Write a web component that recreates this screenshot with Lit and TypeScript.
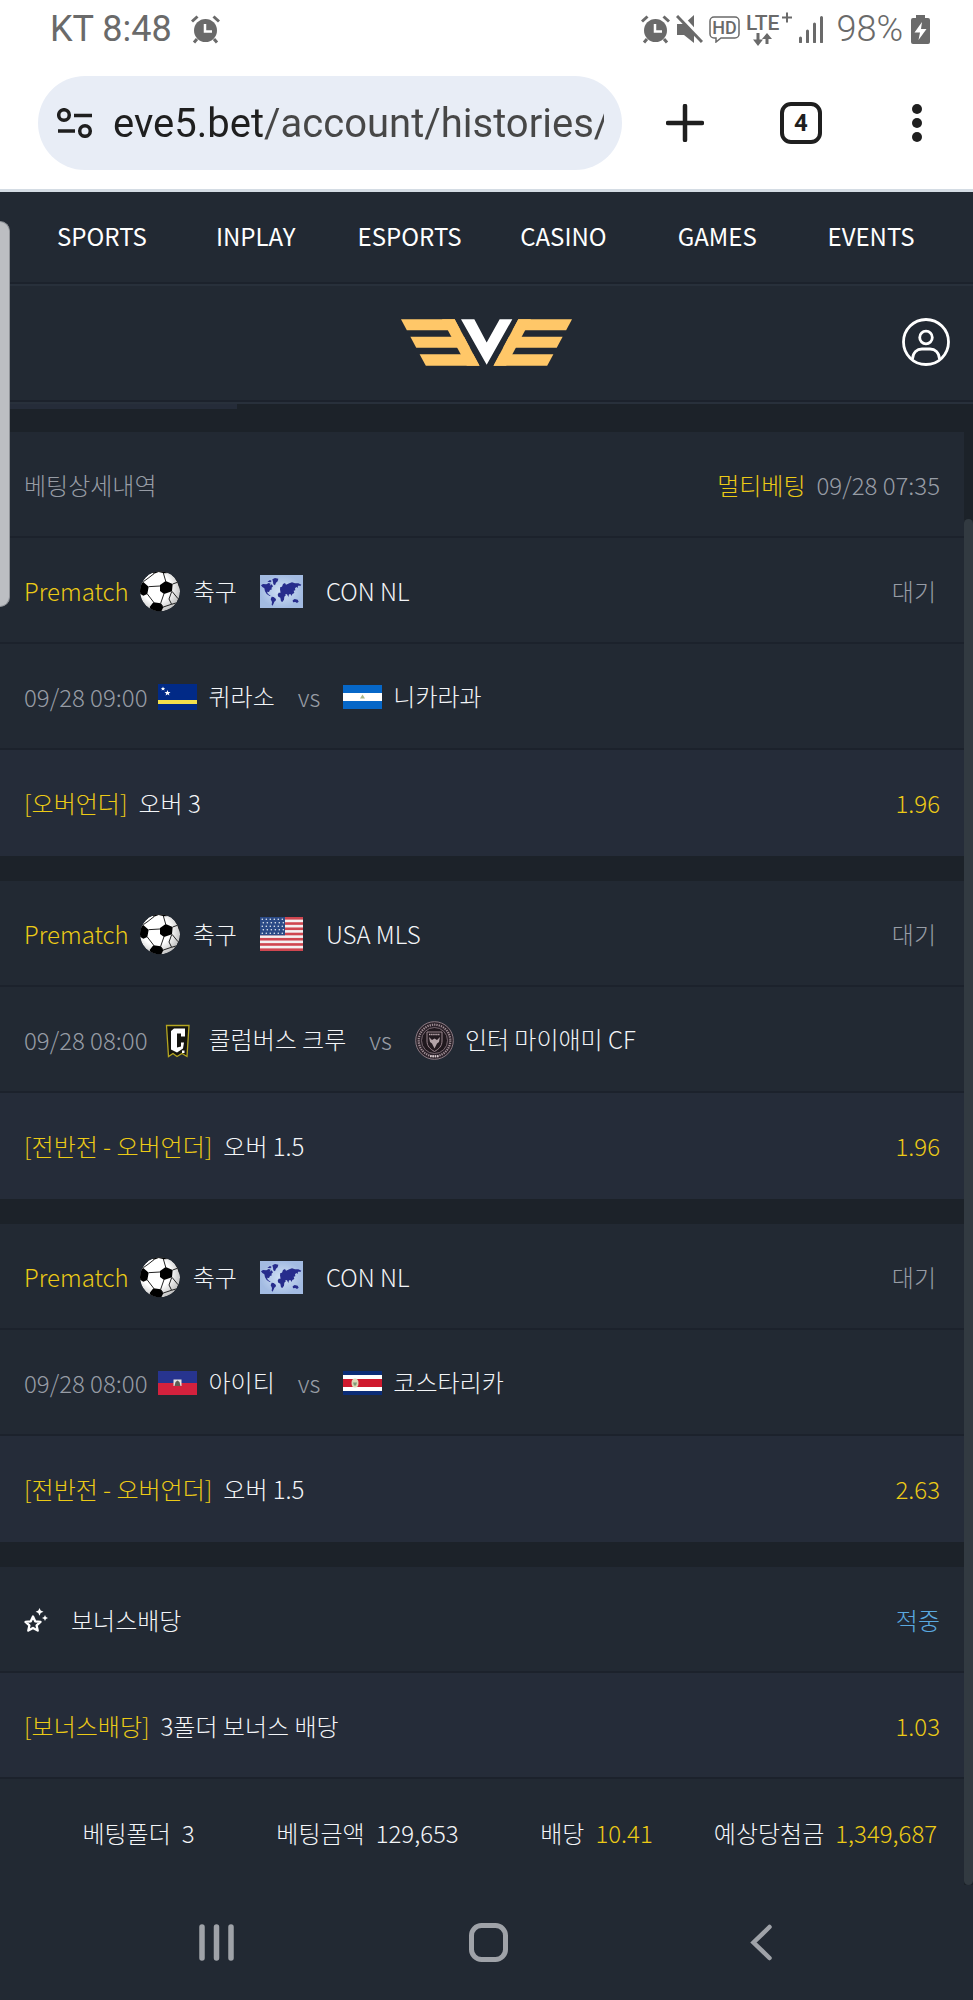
import { LitElement, html, css, svg, nothing } from "lit";
import type { TemplateResult } from "lit";
import { customElement, property } from "lit/decorators.js";

interface Team {
  name: string;
  badge: string;
}

interface Bet {
  sport: string;
  league: string;
  leagueFlag: string;
  status: string;
  date: string;
  home: Team;
  away: Team;
  market: string;
  pick: string;
  odds: string;
}

const MENU = ["SPORTS", "INPLAY", "ESPORTS", "CASINO", "GAMES", "EVENTS"];

const BETS: Bet[] = [
  {
    sport: "축구",
    league: "CON NL",
    leagueFlag: "world",
    status: "대기",
    date: "09/28 09:00",
    home: { name: "퀴라소", badge: "curacao" },
    away: { name: "니카라과", badge: "nicaragua" },
    market: "오버언더",
    pick: "오버 3",
    odds: "1.96",
  },
  {
    sport: "축구",
    league: "USA MLS",
    leagueFlag: "usa",
    status: "대기",
    date: "09/28 08:00",
    home: { name: "콜럼버스 크루", badge: "columbus" },
    away: { name: "인터 마이애미 CF", badge: "miami" },
    market: "전반전 - 오버언더",
    pick: "오버 1.5",
    odds: "1.96",
  },
  {
    sport: "축구",
    league: "CON NL",
    leagueFlag: "world",
    status: "대기",
    date: "09/28 08:00",
    home: { name: "아이티", badge: "haiti" },
    away: { name: "코스타리카", badge: "costarica" },
    market: "전반전 - 오버언더",
    pick: "오버 1.5",
    odds: "2.63",
  },
];

const SUMMARY = [
  { label: "베팅폴더", value: "3", highlight: false },
  { label: "베팅금액", value: "129,653", highlight: false },
  { label: "배당", value: "10.41", highlight: true },
  { label: "예상당첨금", value: "1,349,687", highlight: true },
];

const stripes = [0, 1, 2, 3, 4, 5, 6];
const starRows = [0, 1, 2, 3, 4];
const starCols = [0, 1, 2, 3, 4, 5];

/** Inline pictures by name. Each one carries its own size. */
const ICONS: Record<string, TemplateResult> = {
  alarm: html`<svg width="29" height="29" viewBox="0 0 29 29">
    <circle cx="14.500" cy="15.500" r="11.500" fill="currentColor" />
    <path d="M1 6.500 6.500 1.500M28 6.500 22.500 1.500M6 24l-3 3.500M23 24l3 3.500" stroke="currentColor" stroke-width="3" />
    <path d="M14 9v7.500h7" fill="none" stroke="#fff" stroke-width="2.500" />
  </svg>`,
  mute: html`<svg width="27" height="29" viewBox="0 0 27 29">
    <path d="M1 9h7l10-9v28L8 20H1z" fill="currentColor" />
    <path d="M4 0 27 25" stroke="#fff" stroke-width="4" />
    <path d="M1 1 26 27" stroke="currentColor" stroke-width="3" />
  </svg>`,
  hd: html`<svg width="31" height="27" viewBox="0 0 31 27">
    <path d="M5 1h21a4 4 0 0 1 4 4v13a4 4 0 0 1-4 4H12l-5 4v-4H5a4 4 0 0 1-4-4V5a4 4 0 0 1 4-4z" fill="none" stroke="currentColor" stroke-width="1.500" />
    <text x="15.500" y="18" text-anchor="middle" font-family="Roboto, sans-serif" font-size="18" font-weight="500" fill="currentColor">HD</text>
  </svg>`,
  lte: html`<svg width="47" height="36" viewBox="0 0 47 36">
    <text x="0" y="19" font-family="Roboto, sans-serif" font-size="21" font-weight="500" fill="currentColor">LTE</text>
    <path d="M36 6.500h10M41 1.500v10" stroke="currentColor" stroke-width="2" />
    <path d="M12 22v9M21 33v-9" stroke="currentColor" stroke-width="3" />
    <path d="M7 28.500h10L12 35zM16 28h10L21 22z" fill="currentColor" />
  </svg>`,
  signal: html`<svg width="25" height="27" viewBox="0 0 25 27">
    <path d="M1.500 22v4M8.500 15v11M15.500 8v18M22.500 1.500V26" stroke="currentColor" stroke-width="3" stroke-linecap="round" />
  </svg>`,
  battery: html`<svg width="19" height="29" viewBox="0 0 19 29">
    <path d="M5 0h9v3h3a2 2 0 0 1 2 2v22a2 2 0 0 1-2 2H2a2 2 0 0 1-2-2V5a2 2 0 0 1 2-2h3z" fill="currentColor" />
    <path d="M11 7 3.500 17.500H9L7.500 25 15.500 14H10z" fill="#fff" />
  </svg>`,
  tune: html`<svg width="36" height="30" viewBox="0 0 36 30" fill="none" stroke="#1f1f1f" stroke-width="3.500">
    <circle cx="7" cy="7" r="5.300" />
    <path d="M17 7.500h18M1 23h17" />
    <circle cx="28" cy="23" r="5.300" />
  </svg>`,
  plus: html`<svg width="38" height="38" viewBox="0 0 38 38">
    <path d="M19 2v34M2 19h34" stroke="#1f1f1f" stroke-width="4.500" stroke-linecap="round" />
  </svg>`,
  dots: html`<svg width="10" height="38" viewBox="0 0 10 38" fill="#1f1f1f">
    <circle cx="5" cy="5" r="5" />
    <circle cx="5" cy="19" r="5" />
    <circle cx="5" cy="33" r="5" />
  </svg>`,
  logo: html`<svg width="171" height="47" viewBox="0 0 513 140">
    <g fill="#ffc768">
      <g transform="skewX(28)">
        <rect width="161" height="33" />
        <rect y="53" width="161" height="33" />
        <rect y="105" width="161" height="35" />
        <rect x="123" width="38" height="140" />
      </g>
      <g transform="translate(513 0) scale(-1 1) skewX(28)">
        <rect width="161" height="33" />
        <rect y="53" width="161" height="33" />
        <rect y="105" width="161" height="35" />
        <rect x="123" width="38" height="140" />
      </g>
    </g>
    <path d="M180 0h40l37 70 39-70h38l-77 137z" fill="#fff" />
  </svg>`,
  user: html`<svg width="48" height="48" viewBox="0 0 48 48" fill="none" stroke="#fff" stroke-width="2.800">
    <circle cx="24" cy="24" r="22.500" />
    <circle cx="24" cy="19.500" r="6.300" />
    <path d="M10.500 41c.5-6.500 4.500-10 9.500-10h8c5 0 9 3.500 9.500 10" />
  </svg>`,
  ball: html`<svg width="40" height="41" viewBox="0 0 120 123">
    <defs>
      <radialGradient id="shade" cx="0.400" cy="0.400" r="0.650">
        <stop offset="0.550" stop-color="#fff" />
        <stop offset="1" stop-color="#bdbdbd" />
      </radialGradient>
      <clipPath id="round"><circle cx="60" cy="61" r="60" /></clipPath>
    </defs>
    <g clip-path="url(#round)">
      <circle cx="60" cy="61" r="60" fill="url(#shade)" />
      <path d="M60 42 77 30l21 9-2 22-24 8-12-9zM-2 46 9 32l17 15-4 22-12 5L0 68zM29 108l11-14 22 3 8 12-8 16-28-2zM34 4 60-2l28 8-16 1-16-4-14 5zM104 20l18 18 2 24-8-16-4-12zM124 74l-10 10-6 20-14 14 30-6z" />
      <path d="M26 47l34-2M22 69l20 26M72 68 62 97M96 61l18 22M98 39l14-5M77 30 70 6M10 32 24 22 42 8M62 97l8 12M70 108l24-8 14-4M95 62l-8 22 8 16" fill="none" stroke="#222" stroke-width="3" />
    </g>
  </svg>`,
  world: html`<svg width="43" height="33" viewBox="0 0 129 99">
    <defs>
      <radialGradient id="sea">
        <stop offset="0" stop-color="#d2e2f5" />
        <stop offset="1" stop-color="#a3bbe2" />
      </radialGradient>
    </defs>
    <rect width="129" height="99" fill="url(#sea)" />
    <path d="M3 31l6-4 10 1 7-4 6 2-3 6 6-4 4 6-5 5 2 4-6 2-3 6-5-1 0 4 5 5 5 3-3 1-9-6-5-8-2-9-6-4zM37 13l8-4 10 2-2 8-5 4-3 8-5-3-1-8zM22 20l8-5 5 3-4 4zM35 65l6 1 7 6-1 5-4 3-3 8-3 4-2-3 1-8-4-8zM56 53l8-2 8 3 6 6-5 5-1 9-5 7-4-2-2-11-6-3-2-6zM60 43l1-7 5-1 3-8 6-3 3 5 10-4 8-3 9 3 10 0 9 4-2 3-8 0-1 7-4-3-4 4 1 6-5 1 2 7-6 3-2 6-3-5-5 0-2 8-4-8-5-1-3 3-6-6-5 2zM98 76l6-4 9 2 3 6-5 4-5-3-7 1z" fill="#272c8c" />
  </svg>`,
  usa: html`<svg width="43" height="34" viewBox="0 0 43 34">
    <rect width="43" height="34" fill="#f4f1f2" />
    ${stripes.map((i) => svg`<rect y=${i * 5.23} width="43" height="2.615" fill="#cf4650" />`)}
    <rect width="25" height="18.300" fill="#2b4a86" />
    ${starRows.map((r) =>
      starCols.map(
        (c) => svg`<circle cx=${2.3 + c * 4 + (r % 2)} cy=${2.2 + r * 3.5} r="0.800" fill="#e8edf5" />`
      )
    )}
  </svg>`,
  curacao: html`<svg width="39" height="26" viewBox="0 0 39 26">
    <rect width="39" height="26" fill="#012a87" />
    <rect y="16" width="39" height="4" fill="#f3e04c" />
    <path d="M5 2.500l.6 1.500h1.600L6 5l.5 1.600L5 5.700l-1.400.9L4 5 2.800 4h1.600zM9.500 6l.8 2h2.200l-1.700 1.400.6 2.200-1.900-1.300-1.900 1.300.6-2.200L6.500 8h2.200z" fill="#fff" />
  </svg>`,
  nicaragua: html`<svg width="39" height="24" viewBox="0 0 39 24">
    <rect width="39" height="24" fill="#0667c8" />
    <rect y="8" width="39" height="8" fill="#fff" />
    <path d="M19.500 9.500l2.500 4h-5z" fill="#a9b88a" />
  </svg>`,
  haiti: html`<svg width="39" height="24" viewBox="0 0 39 24">
    <rect width="39" height="12" fill="#27348f" />
    <rect y="12" width="39" height="12" fill="#d4213d" />
    <rect x="15.500" y="8.500" width="8" height="6.500" fill="#e9e6e2" />
    <path d="M16.500 15l1-4 2-1.500 2 1.500 1 4z" fill="#5d5f55" />
  </svg>`,
  costarica: html`<svg width="39" height="24" viewBox="0 0 39 24">
    <rect width="39" height="24" fill="#0b2c76" />
    <rect y="4" width="39" height="16" fill="#fff" />
    <rect y="8" width="39" height="8" fill="#cf1a2e" />
    <ellipse cx="12" cy="12" rx="3.500" ry="4.500" fill="#ddd6b4" />
    <path d="M10 11.500h4l-1 3h-2z" fill="#7f9a77" />
  </svg>`,
  columbus: html`<svg width="39" height="39" viewBox="0 0 39 39">
    <path d="M8.500 4.500h22.500l-2 31-5-3-5 3-4-3-4.500 3z" fill="#14140f" stroke="#b5a621" stroke-width="1.300" />
    <path d="M13 10l3-2.500h11v8h-4v-3h-4v14l4-1v-4h3l-1 6-6 4-6-3z" fill="#fff" />
    <path d="M24 29.500h2.500V32H24z" fill="#fff" />
  </svg>`,
  miami: html`<svg width="39" height="39" viewBox="0 0 39 39">
    <circle cx="19.500" cy="19.500" r="18.800" fill="#2a2129" stroke="#8c7a83" stroke-width="1" />
    <circle cx="19.500" cy="19.500" r="15.800" fill="none" stroke="#a08e95" stroke-width="2.200" stroke-dasharray="1.300 1" />
    <circle cx="19.500" cy="19.500" r="13" fill="#20181e" stroke="#8c7a83" stroke-width="0.800" />
    <path d="M12 11h15v9c0 5-3 8-7.500 10.500C15 28 12 25 12 20z" fill="#231a20" stroke="#9a868e" stroke-width="1" />
    <path d="M14 13.500h11" stroke="#c0adb3" stroke-width="1.500" stroke-dasharray="1.500 0.600" />
    <path d="M14 16l3 3 2.500-1.500L22 19l3-3-1 5-2 1.500-2.500 5-2.500-5L15 21z" fill="#b3a3a8" />
    <path d="M15 35.300h9" stroke="#d9ccd0" stroke-width="2" stroke-dasharray="1.600 0.700" />
  </svg>`,
  bonus: html`<svg width="24" height="24" viewBox="0 0 24 24">
    <path d="M9 8.500l2.200 4.800 5.300.6-3.900 3.500 1.100 5.200L9 20l-4.700 2.600 1.100-5.200-3.900-3.500 5.300-.6z" fill="none" stroke="#fff" stroke-width="2.300" stroke-linejoin="round" />
    <path d="M15.500 0l1.200 2.600 2.800 1.100-2.800 1.200-1.200 2.800-1.200-2.800-2.600-1.200 2.600-1.100zM21 7l.9 2.100 2.100.9-2.100.9L21 13l-.9-2.100L18 10l2.100-.9z" fill="#fff" />
  </svg>`,
  recents: html`<svg width="35" height="37" viewBox="0 0 35 37">
    <path d="M3 3v31M17.500 3v31M32 3v31" stroke="currentColor" stroke-width="5.500" stroke-linecap="round" />
  </svg>`,
  home: html`<svg width="39" height="39" viewBox="0 0 39 39">
    <rect x="2.500" y="2.500" width="34" height="34" rx="10" fill="none" stroke="currentColor" stroke-width="5" />
  </svg>`,
  back: html`<svg width="22" height="37" viewBox="0 0 22 37">
    <path d="M19.500 3 3.500 18.500l16 15.500" fill="none" stroke="currentColor" stroke-width="4.500" stroke-linecap="round" />
  </svg>`,
};

/** One match of a multi bet: league line, teams line and the picked odds. */
@customElement("bet-card")
export class BetCard extends LitElement {
  @property({ attribute: false }) bet!: Bet;

  static styles = css`
    :host {
      display: block;
    }
    svg {
      display: block;
      flex: none;
    }
    .row {
      box-sizing: border-box;
      display: flex;
      align-items: center;
      min-height: 106px;
      padding: 2px 24px 0;
      border-bottom: 2px solid var(--line);
      background: var(--panel);
    }
    .row:last-child {
      background: var(--panel-alt);
      border-bottom-color: transparent;
    }
    .ball {
      margin: 0 13px 0 11px;
    }
    .flag {
      margin: 0 23px;
    }
    .end {
      margin-left: auto;
    }
    .status {
      padding-right: 4px;
    }
    .date {
      margin-right: 11px;
    }
    .team {
      display: flex;
      align-items: center;
      gap: 11px;
    }
    .name {
      padding-bottom: 3px;
    }
    .vs {
      margin: 0 23px;
    }
    .pick {
      margin-left: 11px;
    }
    .accent {
      color: var(--accent);
    }
    .muted {
      color: var(--muted);
    }
  `;

  _team(team: Team) {
    return html`<span class="team">${ICONS[team.badge]}<span class="name">${team.name}</span></span>`;
  }

  render() {
    const b = this.bet;
    return html`
      <div class="row">
        <span class="accent">Prematch</span>
        <span class="ball">${ICONS.ball}</span>
        <span>${b.sport}</span>
        <span class="flag">${ICONS[b.leagueFlag]}</span>
        <span>${b.league}</span>
        <span class="end status muted">${b.status}</span>
      </div>
      <div class="row">
        <time class="date muted">${b.date}</time>
        ${this._team(b.home)}
        <span class="vs muted">vs</span>
        ${this._team(b.away)}
      </div>
      <div class="row">
        <span class="accent">[${b.market}]</span>
        <span class="pick">${b.pick}</span>
        <span class="end accent">${b.odds}</span>
      </div>
    `;
  }
}

@customElement("app-root")
export class AppRoot extends LitElement {
  static styles = css`
    :host {
      --panel: #222933;
      --panel-alt: #252c39;
      --gap: #1c2229;
      --line: #1c222c;
      --edge: #28303b;
      --accent: #ecca16;
      --muted: #979ca5;
      display: block;
      position: relative;
      background: var(--panel);
      color: #f3f5f8;
      font-family: "Noto Sans CJK KR", "Noto Sans", sans-serif;
      font-size: 24px;
      font-weight: 300;
      line-height: 36px;
    }
    svg {
      display: block;
      flex: none;
    }
    button {
      display: flex;
      align-items: center;
      justify-content: center;
      padding: 0;
      border: none;
      background: none;
      font: inherit;
      color: inherit;
      cursor: pointer;
    }
    .status-bar {
      box-sizing: border-box;
      display: flex;
      align-items: center;
      height: 58px;
      padding: 0 43px 0 50px;
      background: #fff;
      color: #6a6a6a;
      font-family: Roboto, sans-serif;
      font-size: 36px;
      font-weight: 400;
    }
    .clock {
      margin-right: 19px;
    }
    .indicators {
      display: flex;
      align-items: center;
      gap: 6px;
      margin-left: auto;
    }
    .percent {
      margin: 0 2px 0 6px;
      font-weight: 300;
    }
    .toolbar {
      display: flex;
      align-items: center;
      gap: 39px;
      padding: 18px 32px 19px 38px;
      background: #fff;
      border-bottom: 3px solid #d4dce4;
      font-family: Roboto, sans-serif;
    }
    .omnibox {
      box-sizing: border-box;
      flex: 1;
      min-width: 0;
      display: flex;
      align-items: center;
      gap: 20px;
      height: 94px;
      padding: 0 18px 0 19px;
      border-radius: 47px;
      background: #e8edf6;
    }
    .url {
      flex: 1;
      min-width: 0;
      height: 60px;
      padding: 0;
      border: none;
      outline: none;
      font-family: inherit;
      font-size: 40px;
      font-weight: 400;
      color: #474747;
      background: linear-gradient(to right, #1f1f1f 151px, #474747 151px);
      background-clip: text;
      -webkit-background-clip: text;
      -webkit-text-fill-color: transparent;
    }
    .actions {
      display: flex;
      gap: 68px;
    }
    .actions button {
      width: 48px;
      height: 48px;
    }
    .count {
      box-sizing: border-box;
      width: 42px;
      height: 42px;
      border: 4px solid #1f1f1f;
      border-radius: 11px;
      color: #1f1f1f;
      font-size: 24px;
      font-weight: 700;
      line-height: 34px;
    }
    .menu {
      display: grid;
      grid-template-columns: repeat(6, 1fr);
      padding: 26px 25px 28px;
      border-bottom: 2px solid var(--line);
    }
    .menu a {
      color: #fff;
      text-align: center;
      text-decoration: none;
      font-weight: 400;
    }
    .masthead {
      display: grid;
      grid-template-columns: 1fr auto 1fr;
      align-items: center;
      padding: 32px 23px 34px;
      border-top: 2px solid var(--edge);
      border-bottom: 2px solid var(--line);
    }
    .masthead a {
      grid-column: 2;
    }
    .masthead button {
      justify-self: end;
    }
    main {
      position: relative;
      padding-right: 9px;
      border-top: 2px solid var(--edge);
      background: var(--gap);
    }
    .tab-edge {
      width: calc(25% - 4px);
      height: 5px;
      margin-bottom: 23px;
      background: var(--panel-alt);
    }
    .scrollbar {
      position: absolute;
      top: 115px;
      right: 0;
      bottom: 0;
      width: 9px;
      border-radius: 5px;
      background: #323a41;
    }
    .row {
      box-sizing: border-box;
      display: flex;
      align-items: center;
      min-height: 106px;
      padding: 2px 24px 0;
      border-bottom: 2px solid var(--line);
      background: var(--panel);
    }
    .row.alt {
      background: var(--panel-alt);
    }
    .end {
      margin-left: auto;
    }
    .accent {
      color: var(--accent);
    }
    .muted {
      color: var(--muted);
    }
    .hit {
      color: #5aa9e0;
    }
    .placed,
    .pick {
      margin-left: 11px;
    }
    .bonus-name {
      margin-left: 23px;
    }
    bet-card {
      margin-bottom: 25px;
    }
    .summary {
      display: grid;
      grid-template-columns: repeat(4, 1fr);
      margin: 0;
      border-bottom: none;
    }
    .summary div {
      display: flex;
      justify-content: center;
      gap: 11px;
      white-space: nowrap;
    }
    dd {
      margin: 0;
    }
    .system-nav {
      display: grid;
      grid-template-columns: repeat(3, 1fr);
      padding: 0 76px 0 80px;
      color: #9fa2a8;
    }
    .system-nav button {
      height: 115px;
    }
    .edge-handle {
      position: absolute;
      top: 221px;
      left: 0;
      box-sizing: border-box;
      width: 10px;
      height: 386px;
      border: 1px solid #8e9196;
      border-left: none;
      border-radius: 0 10px 10px 0;
      background: #bcbec2;
    }
  `;

  _statusBar() {
    return html`
      <div class="status-bar">
        <span class="clock">KT 8:48</span>
        ${ICONS.alarm}
        <div class="indicators">
          ${ICONS.alarm} ${ICONS.mute} ${ICONS.hd} ${ICONS.lte} ${ICONS.signal}
          <span class="percent">98%</span>
          ${ICONS.battery}
        </div>
      </div>
    `;
  }

  _toolbar() {
    return html`
      <div class="toolbar">
        <div class="omnibox">
          <button aria-label="Site settings">${ICONS.tune}</button>
          <input class="url" type="text" aria-label="Address" .value=${"eve5.bet/account/histories/"} />
        </div>
        <div class="actions">
          <button aria-label="New tab">${ICONS.plus}</button>
          <button aria-label="Tabs"><span class="count">4</span></button>
          <button aria-label="More">${ICONS.dots}</button>
        </div>
      </div>
    `;
  }

  render() {
    return html`
      ${this._statusBar()} ${this._toolbar()}
      <nav class="menu">${MENU.map((item) => html`<a href="#">${item}</a>`)}</nav>
      <header class="masthead">
        <a href="#" aria-label="EVE">${ICONS.logo}</a>
        <button aria-label="Account">${ICONS.user}</button>
      </header>
      <main>
        <div class="tab-edge"></div>
        <div class="row">
          <span class="muted">베팅상세내역</span>
          <span class="end accent">멀티베팅</span>
          <time class="placed muted">09/28 07:35</time>
        </div>
        ${BETS.map((bet) => html`<bet-card .bet=${bet}></bet-card>`)}
        <div class="row">
          ${ICONS.bonus}
          <span class="bonus-name">보너스배당</span>
          <span class="end hit">적중</span>
        </div>
        <div class="row alt">
          <span class="accent">[보너스배당]</span>
          <span class="pick">3폴더 보너스 배당</span>
          <span class="end accent">1.03</span>
        </div>
        <dl class="row summary">
          ${SUMMARY.map(
            (s) => html`<div>
              <dt>${s.label}</dt>
              <dd class=${s.highlight ? "accent" : nothing}>${s.value}</dd>
            </div>`
          )}
        </dl>
        <div class="scrollbar"></div>
      </main>
      <nav class="system-nav">
        <button aria-label="Recents">${ICONS.recents}</button>
        <button aria-label="Home">${ICONS.home}</button>
        <button aria-label="Back">${ICONS.back}</button>
      </nav>
      <div class="edge-handle"></div>
    `;
  }
}
